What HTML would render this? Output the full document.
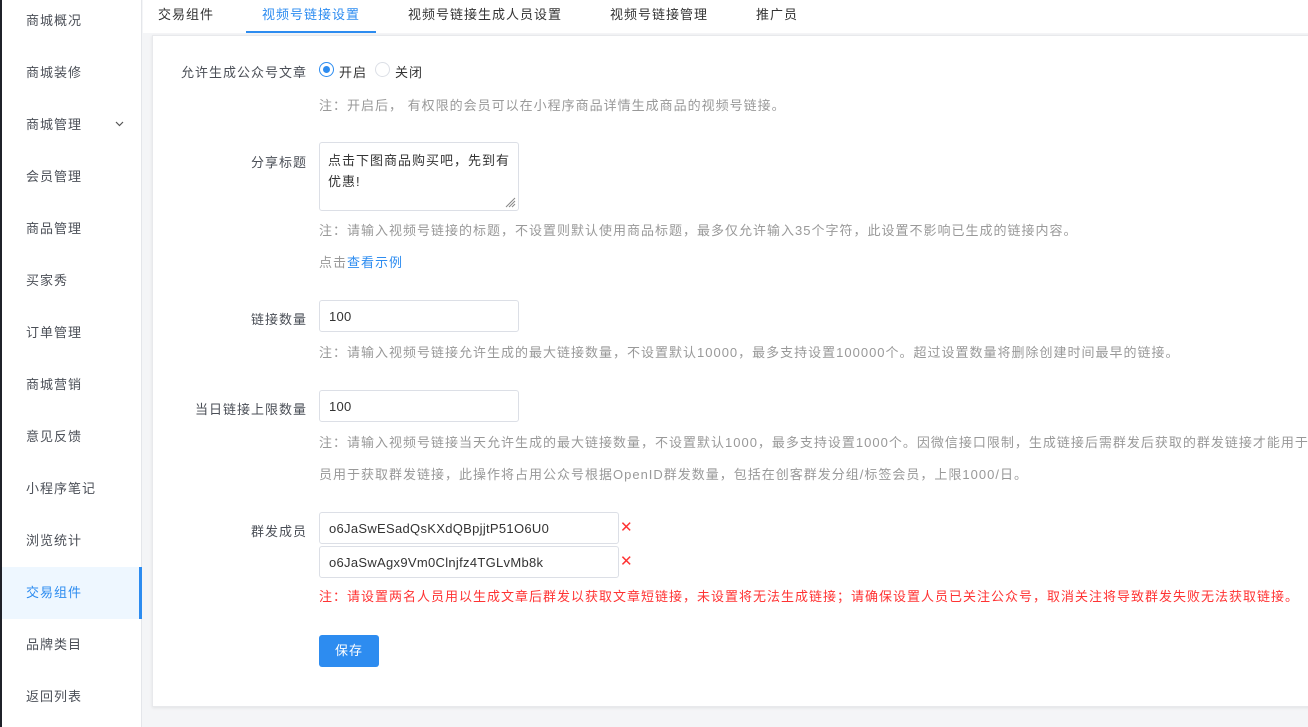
<!DOCTYPE html>
<html><head><meta charset="utf-8"><style>
*{margin:0;padding:0;box-sizing:border-box}
body{width:1308px;height:727px;overflow:hidden;background:#f4f5f7;font-family:"Liberation Sans","Noto Sans CJK SC",sans-serif;font-size:13px;color:#606266;position:relative;letter-spacing:1px}
.side{position:absolute;left:0;top:0;width:142px;height:727px;background:#fff;border-right:1px solid #e4e6ea}
.side:before{content:"";position:absolute;left:0;top:0;width:2px;height:727px;background:#1f2129}
.si{position:absolute;left:2px;width:139px;height:52px;line-height:52px;padding-left:24px;color:#4b4f57;font-size:13px}
.si.on{background:#eef7ff;color:#2d8cf0;border-right:3px solid #2d8cf0;width:140px}
.tabs{position:absolute;left:143px;top:0;right:0;height:33px;background:#fff}
.tab{position:absolute;top:0;height:33px;line-height:30px;font-size:13px;color:#333}
.tab.on{color:#2d8cf0;border-bottom:2px solid #2d8cf0}
.card{position:absolute;left:152px;top:35px;width:1170px;height:672px;background:#fff;border:1px solid #e8e9ec;box-shadow:0 1px 3px rgba(0,0,0,.08)}
.a{position:absolute;white-space:nowrap}
.lbl{text-align:right;width:160px;left:147px;color:#4b4f57}
.note{color:#999;font-size:13px;left:319px}
.inp{position:absolute;left:319px;width:200px;height:32px;border:1px solid #dcdfe6;border-radius:3px;padding-left:9px;line-height:32px;color:#333;font-size:13px;letter-spacing:.3px}
.x{position:absolute;left:620px;color:#f33;font-size:15px}
</style></head><body>
<div class="side">
<div class="si" style="top:-5px">商城概况</div>
<div class="si" style="top:47px">商城装修</div>
<div class="si" style="top:99px">商城管理<svg style="position:absolute;left:113px;top:22px" width="9" height="6"><path d="M1 1L4.5 4.5L8 1" stroke="#555" fill="none" stroke-width="1.2"/></svg></div>
<div class="si" style="top:151px">会员管理</div>
<div class="si" style="top:203px">商品管理</div>
<div class="si" style="top:255px">买家秀</div>
<div class="si" style="top:307px">订单管理</div>
<div class="si" style="top:359px">商城营销</div>
<div class="si" style="top:411px">意见反馈</div>
<div class="si" style="top:463px">小程序笔记</div>
<div class="si" style="top:515px">浏览统计</div>
<div class="si on" style="top:567px">交易组件</div>
<div class="si" style="top:619px">品牌类目</div>
<div class="si" style="top:671px">返回列表</div>
</div>
<div class="tabs">
<div class="tab" style="left:15px">交易组件</div>
<div class="tab on" style="left:103px;width:130px;text-align:center">视频号链接设置</div>
<div class="tab" style="left:265px">视频号链接生成人员设置</div>
<div class="tab" style="left:467px">视频号链接管理</div>
<div class="tab" style="left:613px">推广员</div>
</div>
<div class="card"></div>
<div class="a lbl" style="top:62px">允许生成公众号文章</div>
<div class="a" style="left:319px;top:62px;width:15px;height:15px;border-radius:50%;border:1px solid #2d8cf0"><div style="margin:3px;width:7px;height:7px;border-radius:50%;background:#2d8cf0"></div></div>
<div class="a" style="left:339px;top:62px;color:#333">开启</div>
<div class="a" style="left:375px;top:62px;width:15px;height:15px;border-radius:50%;border:1px solid #dcdfe6"></div>
<div class="a" style="left:395px;top:62px;color:#333">关闭</div>
<div class="a note" style="top:95px">注：开启后， 有权限的会员可以在小程序商品详情生成商品的视频号链接。</div>
<div class="a lbl" style="top:152px">分享标题</div>
<div class="a" style="left:319px;top:142px;width:200px;height:69px;border:1px solid #dcdfe6;border-radius:3px;padding:7px 8px;line-height:21px;color:#333;white-space:normal">点击下图商品购买吧，先到有优惠!<svg style="position:absolute;right:2px;bottom:2px" width="12" height="12"><path d="M11 2L2 11M11 5L5 11M11 8L8 11" stroke="#888" stroke-width="1"/></svg></div>
<div class="a note" style="top:220px">注：请输入视频号链接的标题，不设置则默认使用商品标题，最多仅允许输入35个字符，此设置不影响已生成的链接内容。</div>
<div class="a note" style="top:252px">点击<span style="color:#2d8cf0">查看示例</span></div>
<div class="a lbl" style="top:309px">链接数量</div>
<div class="inp" style="top:300px">100</div>
<div class="a note" style="top:342px">注：请输入视频号链接允许生成的最大链接数量，不设置默认10000，最多支持设置100000个。超过设置数量将删除创建时间最早的链接。</div>
<div class="a lbl" style="top:399px">当日链接上限数量</div>
<div class="inp" style="top:390px">100</div>
<div class="a note" style="top:432px">注：请输入视频号链接当天允许生成的最大链接数量，不设置默认1000，最多支持设置1000个。因微信接口限制，生成链接后需群发后获取的群发链接才能用于视频号</div>
<div class="a note" style="top:464px">员用于获取群发链接，此操作将占用公众号根据OpenID群发数量，包括在创客群发分组/标签会员，上限1000/日。</div>
<div class="a lbl" style="top:521px">群发成员</div>
<div class="inp" style="top:512px;width:300px">o6JaSwESadQsKXdQBpjjtP51O6U0</div>
<div class="x" style="top:518px">✕</div>
<div class="inp" style="top:546px;width:300px">o6JaSwAgx9Vm0Clnjfz4TGLvMb8k</div>
<div class="x" style="top:552px">✕</div>
<div class="a" style="left:319px;top:586px;color:#f33">注：请设置两名人员用以生成文章后群发以获取文章短链接，未设置将无法生成链接；请确保设置人员已关注公众号，取消关注将导致群发失败无法获取链接。</div>
<div class="a" style="left:319px;top:635px;width:60px;height:32px;background:#2d8cf0;border-radius:3px;color:#fff;text-align:center;line-height:32px">保存</div>
</body></html>
